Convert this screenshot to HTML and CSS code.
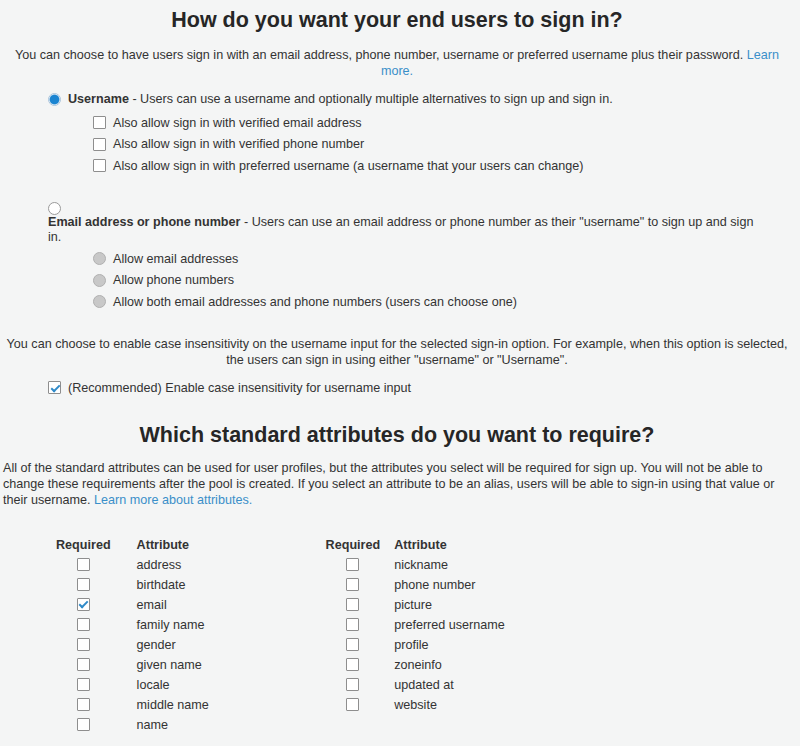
FILE: index.html
```html
<!DOCTYPE html>
<html lang="en">
<head>
<meta charset="utf-8">
<title>Sign in options</title>
<link rel="stylesheet" href="styles.css">
</head>
<body>
<div class="page">
  <h1 class="title">How do you want your end users to sign in?</h1>
  <p class="intro">You can choose to have users sign in with an email address, phone number, username or preferred username plus their password. <a href="#" class="link">Learn more.</a></p>

  <div class="option option--username">
    <div class="row">
      <span class="radio radio--on"></span>
      <span class="row-text"><b>Username</b> - Users can use a username and optionally multiple alternatives to sign up and sign in.</span>
    </div>
    <div class="sublist">
      <div class="row"><span class="check"></span><span class="row-text">Also allow sign in with verified email address</span></div>
      <div class="row"><span class="check"></span><span class="row-text">Also allow sign in with verified phone number</span></div>
      <div class="row"><span class="check"></span><span class="row-text">Also allow sign in with preferred username (a username that your users can change)</span></div>
    </div>
  </div>

  <div class="option option--email">
    <span class="radio radio--block"></span>
    <div class="email-label"><b>Email address or phone number</b> - Users can use an email address or phone number as their "username" to sign up and sign in.</div>
    <div class="sublist sublist--radios">
      <div class="row"><span class="radio radio--disabled"></span><span class="row-text">Allow email addresses</span></div>
      <div class="row"><span class="radio radio--disabled"></span><span class="row-text">Allow phone numbers</span></div>
      <div class="row"><span class="radio radio--disabled"></span><span class="row-text">Allow both email addresses and phone numbers (users can choose one)</span></div>
    </div>
  </div>

  <p class="case-note">You can choose to enable case insensitivity on the username input for the selected sign-in option. For example, when this option is selected, the users can sign in using either "username" or "Username".</p>
  <div class="row case-row"><span class="check check--on"></span><span class="row-text">(Recommended) Enable case insensitivity for username input</span></div>

  <h2 class="title title--second">Which standard attributes do you want to require?</h2>
  <p class="attr-note">All of the standard attributes can be used for user profiles, but the attributes you select will be required for sign up. You will not be able to change these requirements after the pool is created. If you select an attribute to be an alias, users will be able to sign-in using that value or their username. <a href="#" class="link">Learn more about attributes.</a></p>

  <div class="attr-tables">
    <table class="attr-table attr-table--left">
      <thead><tr><th class="req">Required</th><th class="attr">Attribute</th></tr></thead>
      <tbody>
        <tr><td class="req"><span class="check"></span></td><td class="attr">address</td></tr>
        <tr><td class="req"><span class="check"></span></td><td class="attr">birthdate</td></tr>
        <tr><td class="req"><span class="check check--on"></span></td><td class="attr">email</td></tr>
        <tr><td class="req"><span class="check"></span></td><td class="attr">family name</td></tr>
        <tr><td class="req"><span class="check"></span></td><td class="attr">gender</td></tr>
        <tr><td class="req"><span class="check"></span></td><td class="attr">given name</td></tr>
        <tr><td class="req"><span class="check"></span></td><td class="attr">locale</td></tr>
        <tr><td class="req"><span class="check"></span></td><td class="attr">middle name</td></tr>
        <tr><td class="req"><span class="check"></span></td><td class="attr">name</td></tr>
      </tbody>
    </table>
    <table class="attr-table attr-table--right">
      <thead><tr><th class="req">Required</th><th class="attr">Attribute</th></tr></thead>
      <tbody>
        <tr><td class="req"><span class="check"></span></td><td class="attr">nickname</td></tr>
        <tr><td class="req"><span class="check"></span></td><td class="attr">phone number</td></tr>
        <tr><td class="req"><span class="check"></span></td><td class="attr">picture</td></tr>
        <tr><td class="req"><span class="check"></span></td><td class="attr">preferred username</td></tr>
        <tr><td class="req"><span class="check"></span></td><td class="attr">profile</td></tr>
        <tr><td class="req"><span class="check"></span></td><td class="attr">zoneinfo</td></tr>
        <tr><td class="req"><span class="check"></span></td><td class="attr">updated at</td></tr>
        <tr><td class="req"><span class="check"></span></td><td class="attr">website</td></tr>
      </tbody>
    </table>
  </div>
</div>
</body>
</html>
```

FILE: styles.css
```css
html, body {
  margin: 0;
  padding: 0;
  background: #f4f5f5;
}

body {
  font-family: "Liberation Sans", Arial, sans-serif;
  font-size: 12.6px;
  line-height: 16px;
  color: #333;
}

.page {
  padding: 0 9px 0 3px;
}

.title {
  margin: 7px 0 0;
  font-size: 21.5px;
  line-height: 26px;
  font-weight: bold;
  text-align: center;
  color: #262626;
}

.title--second {
  margin-top: 23px;
}

.link {
  color: #3a8fc9;
  text-decoration: none;
}

.intro {
  margin: 14px 0 0;
  text-align: center;
}

.option {
  margin-left: 45px;
}

.option--username {
  margin-top: 12px;
}

.row {
  display: flex;
  align-items: center;
  height: 21.5px;
}

.option--username > .row {
  height: 16px;
}

.row-text {
  margin-left: 7px;
  white-space: nowrap;
}

.sublist {
  margin-top: 5px;
  padding-left: 45px;
}

.sublist--radios {
  margin-top: 3px;
}

.option--email {
  margin-top: 25.5px;
  margin-right: 30px;
}

.email-label {
  line-height: 15px;
}

.radio {
  display: inline-block;
  box-sizing: border-box;
  width: 13px;
  height: 13px;
  border-radius: 50%;
  border: 1px solid #9a9a9a;
  background: #fff;
  flex: none;
}

.radio--block {
  display: block;
}

.radio--on {
  border-color: #a9c4dc;
  background: radial-gradient(circle at center, #1a84d1 0, #1a84d1 4.3px, #6fb0e0 4.8px, #fff 5.5px);
}

.radio--disabled {
  border-color: #b0b0b0;
  background: #c8c8c8;
}

.check {
  display: inline-block;
  position: relative;
  box-sizing: border-box;
  width: 13px;
  height: 13px;
  border: 1px solid #8e8e8e;
  border-radius: 1px;
  background: #fff;
  flex: none;
  vertical-align: middle;
}

.check--on::after {
  content: "";
  position: absolute;
  left: 3.5px;
  top: 0.5px;
  width: 3px;
  height: 7px;
  border-right: 2px solid #2f8ac8;
  border-bottom: 2px solid #2f8ac8;
  transform: rotate(45deg);
}

.case-note {
  margin: 23px 0 0;
  text-align: center;
}

.case-row {
  margin: 9.5px 0 0 45px;
}

.attr-note {
  margin: 12px 0 0;
}

.attr-tables {
  display: flex;
  align-items: flex-start;
  margin-top: 27px;
  padding-left: 53px;
}

.attr-table {
  border-collapse: collapse;
  border-spacing: 0;
}

.attr-table th,
.attr-table td {
  padding: 0;
  height: 20px;
  line-height: 20px;
  vertical-align: middle;
}

.attr-table th {
  font-weight: bold;
  text-align: left;
}

.attr-table .req {
  width: 54px;
  text-align: center;
}

.attr-table td.req .check {
  vertical-align: -2px;
}

.attr-table--left .attr {
  padding-left: 26px;
  width: 189px;
}

.attr-table--right .attr {
  padding-left: 14px;
}
```
